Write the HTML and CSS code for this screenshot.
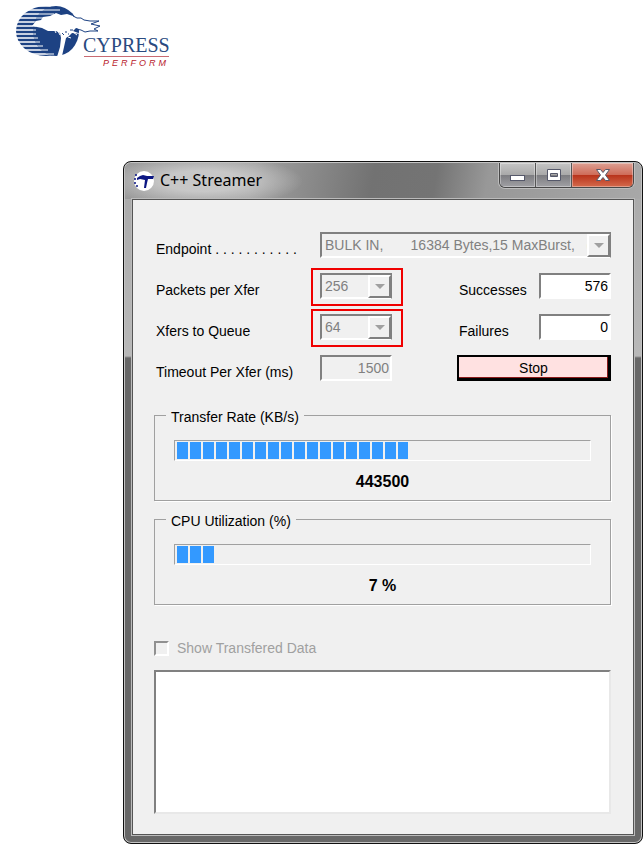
FILE: index.html
```html
<!DOCTYPE html>
<html lang="en">
<head>
<meta charset="utf-8">
<meta name="viewport" content="width=device-width, initial-scale=1">
<title>C++ Streamer</title>
<link rel="stylesheet" href="styles.css">
</head>
<body>
<header class="brand">
  <svg class="brand-logo" width="170" height="72" viewBox="0 0 170 72" role="img" aria-label="Cypress Perform">
    <defs>
      <clipPath id="oval"><ellipse cx="46" cy="31" rx="30" ry="25"/></clipPath>
      <clipPath id="disc"><ellipse cx="56" cy="31" rx="23" ry="25"/></clipPath>
    </defs>
    <g clip-path="url(#oval)">
      <path stroke="#1d4283" stroke-width="2.600" d="M16 8H64M16 12H64M16 16H64M16 20H64M16 24H64M16 28H64M16 32H64M16 36H64M16 40H64M16 44H64M16 48H64M16 52H64M16 56H64"/>
    </g>
    <ellipse cx="56" cy="31" rx="23" ry="25" fill="#1d4283"/>
    <g clip-path="url(#disc)">
      <path stroke="#fff" stroke-width="1.200" d="M30 10H60M30 14H54M30 18H46M30 22H38M30 26H36M30 30H36M30 34H36M30 38H38M30 42H40M30 46H43M30 50H48M30 54H54"/>
    </g>
    <path fill="#fff" d="M32 26L36 21L41 20L43 17L50 16L56 13L61 15L67 14L73 16L79 18L84 20L99 21L92 24L100 26L94 29L98 31L85 31L76 28L73 31L81 34L72 33L69 36L66 38L64 47L62 56L57 57L60 47L61 38L60 33L56 31L48 31L42 28Z"/>
    <path fill="none" stroke="#1d4283" stroke-width="1" d="M73 16L77 18L81 18L84 20L90 21L99 21L91 24L100 26L94 29L98 31L90 31L85 32L81 30L76 29"/>
    <path stroke="#1d4283" stroke-width="1" d="M65 32H67M68 34H69M64 35L62 33M70 30H73"/>
    <path stroke="#fff" stroke-width="1" d="M54 29L56 33M58 31L60 35M73 32L77 35M68 37L71 38"/>
    <text class="brand-name" x="83" y="52">CYPRESS</text>
    <path stroke="#c96a72" stroke-width="1" d="M84 56.500H169"/>
    <text class="brand-tag" x="103" y="66">PERFORM</text>
  </svg>
</header>

<main class="window">
  <div class="titlebar">
    <svg class="app-icon" width="22" height="22" viewBox="0 0 22 22" aria-hidden="true">
      <circle cx="11" cy="11" r="10" fill="#fff"/>
      <path fill="#0b1683" d="M4 8L7 6L10 5L14 6L21 6L20 9H15L14 13L13 18H11L12 10L7 9L4 10Z"/>
      <path stroke="#0b1683" stroke-width="1.500" stroke-dasharray="2 2" d="M1 9H5M1 13H4M3 16H6M2 5H5"/>
    </svg>
    <h1 class="title">C++ Streamer</h1>
    <div class="controls">
      <button class="control" type="button" aria-label="Minimize">
        <svg width="18" height="16" viewBox="0 0 18 16"><rect x="1.500" y="8.500" width="14" height="5" fill="#fff" stroke="#55586a"/></svg>
      </button>
      <button class="control" type="button" aria-label="Maximize">
        <svg width="18" height="16" viewBox="0 0 18 16"><path fill="#fff" fill-rule="evenodd" stroke="#55586a" d="M2.500 2.500H15.500V13.500H2.500ZM5.500 6.500V9.500H12.500V6.500Z"/></svg>
      </button>
      <button class="control control-close" type="button" aria-label="Close">
        <svg width="18" height="16" viewBox="0 0 18 16"><path fill="#fff" stroke="#55586a" d="M2.500 2.500H6.500L9 5.500L11.500 2.500H15.500L11.500 8L15.500 13.500H11.500L9 10.500L6.500 13.500H2.500L6.500 8Z"/></svg>
      </button>
    </div>
  </div>

  <form class="client">
    <div class="settings">
      <label class="label" for="endpoint">Endpoint . . . . . . . . . . .</label>
      <div class="combo combo-wide">
        <select id="endpoint" class="field" disabled><option>BULK IN,&nbsp;&nbsp;&nbsp;&nbsp;&nbsp;&nbsp;&nbsp;16384 Bytes,15 MaxBurst,&nbsp;&nbsp;&nbsp;(</option></select>
        <span class="arrow"></span>
      </div>

      <label class="label" for="packets">Packets per Xfer</label>
      <div class="combo marked">
        <select id="packets" class="field" disabled><option>256</option></select>
        <span class="arrow"></span>
      </div>
      <label class="label" for="successes">Successes</label>
      <input id="successes" class="field number" type="text" value="576">

      <label class="label" for="queue">Xfers to Queue</label>
      <div class="combo marked">
        <select id="queue" class="field" disabled><option>64</option></select>
        <span class="arrow"></span>
      </div>
      <label class="label" for="failures">Failures</label>
      <input id="failures" class="field number" type="text" value="0">

      <label class="label" for="timeout">Timeout Per Xfer (ms)</label>
      <div class="combo"><input id="timeout" class="field number" type="text" value="1500" disabled></div>
      <button class="stop" type="button">Stop</button>
    </div>

    <fieldset class="group">
      <legend>Transfer Rate (KB/s)</legend>
      <progress class="meter" max="32" value="18" aria-label="Transfer rate"></progress>
      <output class="reading">443500</output>
    </fieldset>

    <fieldset class="group">
      <legend>CPU Utilization (%)</legend>
      <progress class="meter" max="32" value="3" aria-label="CPU utilization"></progress>
      <output class="reading">7 %</output>
    </fieldset>

    <label class="show-data"><input class="check" type="checkbox" disabled>Show Transfered Data</label>
    <textarea class="data" rows="8" aria-label="Transfered data"></textarea>
  </form>
</main>
</body>
</html>
```
FILE: styles.css
```css
* {
  box-sizing: border-box;
}

body {
  margin: 0;
  background: #fff;
  color: #000;
  font: 14px/20px "Liberation Sans", Arial, sans-serif;
}

button,
input,
select,
textarea {
  margin: 0;
  font: inherit;
  color: inherit;
}

/* Brand */

.brand {
  height: 161px;
}

.brand-logo {
  display: block;
}

.brand-name {
  font: 20px "Liberation Serif", serif;
  fill: #2a4a80;
}

.brand-tag {
  font: italic 9px "Liberation Sans", sans-serif;
  letter-spacing: 3px;
  fill: #b8202c;
}

/* Window frame */

.window {
  margin: 0 0 0 123px;
  padding: 0 8px 8px;
  border: 1px solid #111;
  border-radius: 8px;
  background: linear-gradient(#a8a8a8, #b8b8b8 194px, #686868 196px, #686868);
  box-shadow: inset 0 0 0 1px #c4c4c4;
}

.titlebar {
  display: flex;
  align-items: flex-start;
  height: 36px;
  margin: 1px -7px 0;
  padding: 0 7px;
  border-radius: 6px 6px 0 0;
  background:
    radial-gradient(ellipse 100px 26px at 78px 18px, rgb(210 210 210 / 80%) 40%, transparent),
    linear-gradient(100deg, #999 0, #a0a0a0 25%, #727272 48%, #747474 60%, #989898 70%, #a8a8a8 100%);
}

.app-icon {
  margin: 7px 5px 0 1px;
}

.title {
  margin: 6px auto 0 0;
  font: 16px/22px "Noto Sans", sans-serif;
}

.controls {
  display: flex;
  border: 1px solid #484848;
  border-top: 0;
  border-radius: 0 0 6px 6px;
  overflow: hidden;
  box-shadow: 0 0 0 1px #bdbdbd;
}

.control {
  display: flex;
  align-items: center;
  justify-content: center;
  width: 36px;
  height: 24px;
  padding: 0;
  border: 0;
  border-right: 1px solid #555;
  background: linear-gradient(#c5c5c5, #aaa 48%, #7c7c80 50%, #a0a0a4);
  box-shadow: inset 0 0 0 1px rgb(255 255 255 / 35%);
}

.control-close {
  width: 61px;
  border-right: 0;
  background: linear-gradient(#dda093, #cf6d5a 48%, #b8321a 50%, #d46a4c);
}

/* Client area */

.client {
  padding: 32px 22px 20px 21px;
  border: 1px solid #555;
  background: #f0f0f0;
  box-shadow: 0 0 0 1px #bbb;
}

.settings {
  display: grid;
  grid-template-columns: 166px 1fr 82px 72px;
  gap: 15px 0;
}

.label {
  padding: 8px 0 0 2px;
  line-height: 18px;
}

.combo {
  position: relative;
  width: 72px;
}

.combo-wide {
  grid-column: 2 / -1;
  width: auto;
}

.field {
  display: block;
  width: 100%;
  height: 26px;
  padding: 0 3px;
  border: 2px solid;
  border-color: #808080 #fff #fff #808080;
  border-radius: 0;
  outline: 0;
  appearance: none;
  background: #fff;
}

.field:disabled {
  background: #f0f0f0;
  color: #808080;
  opacity: 1;
}

.combo select.field {
  border-right-color: #808080;
  padding-right: 22px;
}

.number {
  padding: 0 1px;
  text-align: right;
}

.arrow {
  position: absolute;
  top: 2px;
  right: 1px;
  width: 23px;
  height: 23px;
  border: 2px solid;
  border-color: #fff #808080 #808080 #fff;
  background: #f0f0f0;
}

.arrow::after {
  position: absolute;
  top: 7px;
  left: 5px;
  border: 5px solid transparent;
  border-top-color: #a0a0a0;
  border-bottom: 0;
  content: "";
}

.marked::after {
  position: absolute;
  inset: -5px -11px -7px -9px;
  border: 2px solid #f00000;
  content: "";
}

.stop {
  grid-column: 3 / -1;
  height: 26px;
  padding: 0;
  border: solid #000;
  border-width: 2px 3px 3px 2px;
  background: #ffe1e1;
  box-shadow: inset -1px -1px 0 #8b1a1a;
}

/* Progress groups */

.group {
  min-width: 0;
  margin: 24px 0 0;
  padding: 15px 19px 8px;
  border: 1px solid #a0a0a0;
  box-shadow: 1px 1px 0 #fff;
}

.group + .group {
  margin-top: 8px;
}

.group legend {
  margin-left: -8px;
  padding: 4px 5px 0;
  line-height: 16px;
}

.meter {
  display: block;
  width: 100%;
  height: 21px;
  padding: 1px;
  border: 1px solid;
  border-color: #a0a0a0 #fff #fff #a0a0a0;
  appearance: none;
  background: #f0f0f0;
}

.meter::-webkit-progress-bar {
  background: none;
}

.meter::-webkit-progress-value {
  background: repeating-linear-gradient(90deg, transparent 0 1px, #3399ff 1px 12px, transparent 12px 13px);
}

.reading {
  display: block;
  margin-top: 11px;
  text-align: center;
  font-size: 16px;
  font-weight: bold;
}

/* Data log */

.show-data {
  display: flex;
  align-items: center;
  gap: 8px;
  margin-top: 33px;
  color: #a0a0a0;
}

.check {
  width: 15px;
  height: 15px;
  border: 2px solid;
  border-color: #909090 #fff #fff #909090;
  appearance: none;
}

.data {
  display: block;
  width: 100%;
  margin-top: 12px;
  padding: 2px;
  border: 2px solid;
  border-color: #808080 #e8e8e8 #e8e8e8 #808080;
  outline: 0;
  resize: none;
  line-height: 17px;
}
```
